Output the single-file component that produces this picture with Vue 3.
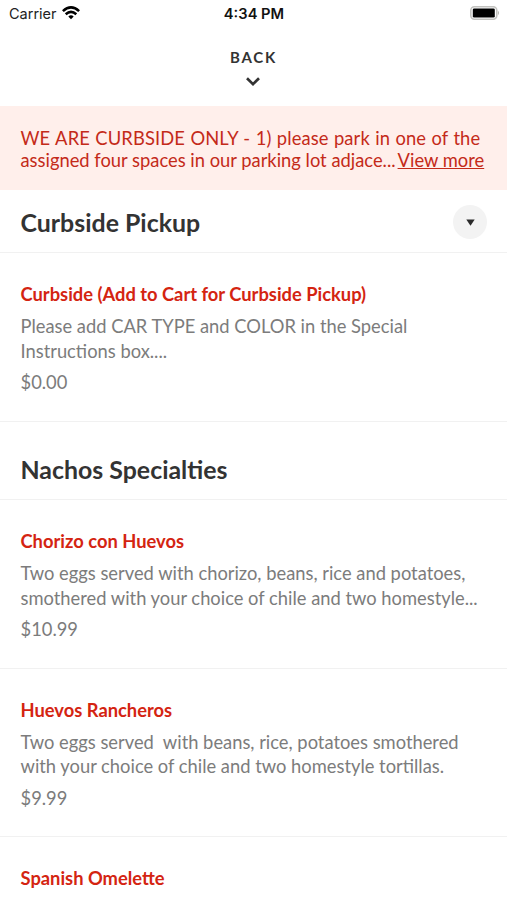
<script setup>
const sections = [
  {
    title: 'Curbside Pickup', toggle: true,
    items: [
      { name: 'Curbside (Add to Cart for Curbside Pickup)', lines: ['Please add CAR TYPE and COLOR in the Special', 'Instructions box....'], price: '$0.00' },
    ],
  },
  {
    title: 'Nachos Specialties', toggle: false,
    items: [
      { name: 'Chorizo con Huevos', lines: ['Two eggs served with chorizo, beans, rice and potatoes,', 'smothered with your choice of chile and two homestyle...'], price: '$10.99' },
      { name: 'Huevos Rancheros', lines: ['Two eggs served  with beans, rice, potatoes smothered', 'with your choice of chile and two homestyle tortillas.'], price: '$9.99' },
      { name: 'Spanish Omelette', lines: [], price: '' },
    ],
  },
]
</script>

<template>
  <main class="screen">
    <header class="status">
      <div class="carrier">
        <span>Carrier</span>
        <svg class="wifi" viewBox="0 0 18 14" width="18" height="14">
          <g fill="none" stroke="#000" stroke-width="2.6">
            <path d="M.9 5.1 Q9 -2.3 17.1 5.1" />
            <path d="M3.7 8.2 Q9 3.6 14.3 8.2" />
          </g>
          <path d="M6.3 10.4 Q9 8.2 11.7 10.4 L9 13.3 Z" />
        </svg>
      </div>
      <time class="time">4:34 PM</time>
      <svg class="battery" viewBox="0 0 30 14" width="30" height="14">
        <rect x=".8" y=".8" width="26" height="12.4" rx="3.6" fill="#fff" stroke="#c2c2bf" stroke-width="1.6" />
        <rect x="2.8" y="2.4" width="22" height="9.2" rx="1.4" />
        <path d="M28 4.8 Q30 7 28 9.2 Z" fill="#b5b5b0" />
      </svg>
    </header>
    <nav class="back">
      <span>BACK</span>
      <svg width="14" height="9" viewBox="0 0 14 9"><path d="M1 1.3 L7 7.1 L13 1.3" fill="none" stroke="#333" stroke-width="2.7" /></svg>
    </nav>
    <aside class="notice">
      <p class="notice-first">WE ARE CURBSIDE ONLY - 1) please park in one of the</p>
      <p class="notice-second"><span class="notice-text">assigned four spaces in our parking lot adjace...</span><a>View more</a></p>
    </aside>
    <section v-for="section in sections" :key="section.title">
      <div class="heading" :class="{ first: section.toggle }">
        <h2>{{ section.title }}</h2>
        <button v-if="section.toggle" aria-label="Select section">
          <svg width="9" height="7" viewBox="0 0 9 7"><path d="M.3 .5 H8.7 L4.5 6.7 Z" fill="#2b2b2b" /></svg>
        </button>
      </div>
      <article v-for="item in section.items" :key="item.name" class="item">
        <h3>{{ item.name }}</h3>
        <div class="description"><p v-for="line in item.lines" :key="line">{{ line }}</p></div>
        <p class="price">{{ item.price }}</p>
      </article>
    </section>
  </main>
</template>

<style>
body { margin: 0; overflow: hidden; background: #fff; }
</style>
<style scoped>
* { box-sizing: border-box; }
p, h2, h3 { margin: 0; }
.screen { width: 507px; height: 900px; overflow: hidden; background: #fff; font-family: Lato, sans-serif; color: #333; }
.status { height: 27px; padding: 0 7px 0 9px; display: grid; grid-template-columns: 1fr auto 1fr; align-items: center; font: 14.5px/27px Inter, sans-serif; color: #222; }
.carrier { display: flex; align-items: center; gap: 5px; }
.wifi { margin-top: -2px; }
.time { font-weight: 600; font-size: 14.7px; line-height: 26px; padding-top: 1px; color: #111; margin-right: 1px; }
.battery { justify-self: end; margin-top: -1px; }
.back { height: 79px; padding-top: 20px; display: flex; flex-direction: column; align-items: center; font-size: 15px; line-height: 20px; font-weight: 700; letter-spacing: 1.7px; }
.back svg { margin-top: 10px; margin-right: 1px; }
.notice { height: 84px; padding: 21px 20.5px 0; background: #ffefeb; color: #c42a19; font-size: 18.35px; line-height: 22px; white-space: nowrap; }
.notice-first { letter-spacing: .12px; word-spacing: .56px; }
.notice-second { display: flex; justify-content: space-between; padding-right: 2.3px; }
.notice a { text-decoration: underline; text-decoration-thickness: 1.3px; }
.heading { height: 78px; padding: 18px 20px 0 20.5px; border-bottom: 1px solid #f1f1f1; display: flex; align-items: center; justify-content: space-between; }
.heading.first { height: 63px; padding-top: 2px; }
h2 { font-size: 24.9px; line-height: 32px; font-weight: 700; }
button { width: 34px; height: 34px; padding: 0; border: 0; border-radius: 50%; background: #f3f3f3; display: flex; align-items: center; justify-content: center; }
.item { height: 168.8px; padding: 29px 20.5px 0; border-bottom: 1px solid #f1f1f1; white-space: pre; }
h3 { height: 24px; font-size: 18.33px; line-height: 24px; font-weight: 700; color: #d42411; }
.description { margin-top: 8px; font-size: 18.33px; line-height: 24.75px; color: #7c7c7c; }
.price { margin-top: 6.5px; font-size: 18.33px; line-height: 24px; color: #7c7c7c; }
</style>
